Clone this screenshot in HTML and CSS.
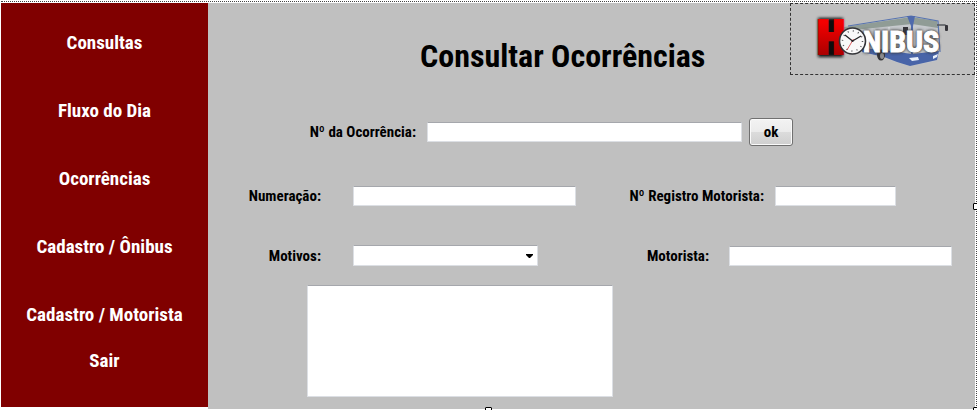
FILE: index.html
```
<!DOCTYPE html>
<html lang="pt-BR">
<head>
<meta charset="utf-8">
<meta name="viewport" content="width=device-width, initial-scale=1">
<title>Consultar Ocorrências</title>
<link rel="stylesheet" href="styles.css">
</head>
<body>
<div class="frame">
  <nav class="sidebar">
    <a href="#consultas">Consultas</a>
    <a class="spaced" href="#fluxo">Fluxo do Dia</a>
    <a class="spaced" href="#ocorrencias">Ocorrências</a>
    <a class="spaced" href="#onibus">Cadastro / Ônibus</a>
    <a class="spaced" href="#motorista">Cadastro / Motorista</a>
    <a class="exit" href="#sair">Sair</a>
  </nav>
  <main class="content">
    <header class="header">
      <h1>Consultar Ocorrências</h1>
      <div class="logo">
        <svg width="183" height="69" viewBox="791 4 183 69" role="img" aria-label="Honibus">
          <defs>
            <linearGradient id="red" x1="0" y1="0" x2="0" y2="1">
              <stop offset="0.2" stop-color="#f40000"/>
              <stop offset="0.85" stop-color="#a80000"/>
            </linearGradient>
            <filter id="soft" x="-30%" y="-30%" width="160%" height="160%"><feGaussianBlur stdDeviation="1.4"/></filter>
          </defs>
          <path d="M844 27 L911 16 L938 21 L940 54 L936 61 L910 66 L896 62 L880 56 L844 50Z" fill="#c6c9cd"/>
          <path d="M844 27 L911 17 L937 21 L938 28 L912 24 L844 31Z" fill="#909c96"/>
          <path d="M848 26 L911 16 L938 21 L940 52" fill="none" stroke="#5874b0" stroke-width="1.2"/>
          <path d="M862 48 L884 50 L912 54 L939 51 L937 60 L910 66 L897 62 L884 57 L862 52Z" fill="#4864a8"/>
          <path d="M907 16 L915 16 L913 26 L913 54 L911 54 L911 26Z" fill="#4f6aac"/>
          <path d="M889 27 V49 M875 29 V49" stroke="#e3e6e8" stroke-width="1"/>
          <rect x="903" y="27" width="5" height="8" fill="#35343a"/>
          <path d="M937 25 L945 25 L947 27" fill="none" stroke="#53565b" stroke-width="1.3"/>
          <rect x="945" y="25" width="3" height="6" rx="1" fill="#35343a"/>
          <ellipse cx="881" cy="55" rx="4" ry="5.5" fill="#343438"/>
          <ellipse cx="882" cy="56" rx="2" ry="3" fill="#8d8d8f"/>
          <path d="M909 58 L918 57 L919 60 L912 61Z" fill="#e9f0fa"/>
          <path d="M933 56 L938 54 L937 57 L933 59Z" fill="#e9f0fa"/>
          <rect x="818" y="18" width="25" height="39" fill="#111" filter="url(#soft)"/>
          <text class="logo-h" x="831" y="53" fill="url(#red)" stroke="url(#red)">H</text>
          <text class="logo-shadow" x="901" y="52" filter="url(#soft)">NIBUS</text>
          <text class="logo-name" x="901" y="52">NIBUS</text>
          <circle cx="852.5" cy="41" r="13" fill="#f9f9f9" stroke="#333438" stroke-width="1.6"/>
          <circle cx="852.5" cy="41" r="10" fill="none" stroke="#55565a" stroke-width="1.5" stroke-dasharray="1 4.236"/>
          <path d="M845 35 L852.5 41 L861 36" fill="none" stroke="#252528" stroke-width="1.3"/>
          <path d="M853.5 39 L847 50" stroke="#d4343a" stroke-width="0.8"/>
          <circle cx="852.5" cy="41" r="1.1" fill="#252528"/>
        </svg>
      </div>
    </header>
    <form class="form" onsubmit="return false">
      <div class="row row-search">
        <label for="numero">Nº da Ocorrência:</label>
        <input id="numero" type="text">
        <button type="submit">ok</button>
      </div>
      <div class="row row-number">
        <label for="numeracao">Numeração:</label>
        <input id="numeracao" type="text">
        <label for="registro">Nº Registro Motorista:</label>
        <input id="registro" type="text">
      </div>
      <div class="row row-reason">
        <label for="motivos">Motivos:</label>
        <div class="select">
          <select id="motivos"><option value=""></option></select>
          <svg class="arrow" width="7" height="4" viewBox="0 0 7 4" aria-hidden="true"><path d="M0 0H7V1L4 4H3L0 1Z"/></svg>
        </div>
        <label for="motorista">Motorista:</label>
        <input id="motorista" type="text">
      </div>
      <div class="row row-notes">
        <textarea id="descricao" aria-label="Descrição"></textarea>
      </div>
    </form>
  </main>
  <span class="handle handle-right"></span>
  <span class="handle handle-bottom"></span>
  <span class="handle handle-corner"></span>
</div>
</body>
</html>
```
FILE: styles.css
```
* {
  box-sizing: border-box;
}

body {
  margin: 0;
  overflow: hidden;
  background: #fff;
  color: #000;
  font: bold 15px/20px "Arial Narrow", "Roboto Condensed", Roboto, "Liberation Sans", sans-serif;
}

.frame {
  position: relative;
  display: flex;
  min-height: 100vh;
  margin-left: 1px;
  padding: 3px 2px 1px 0;
}

/* Dotted selection outline along the top and right edges */
.frame::before {
  content: "";
  position: absolute;
  inset: 1px 0 0 0;
  border-top: 1px dotted #444;
  border-right: 1px dotted #444;
  pointer-events: none;
}

.sidebar {
  display: flex;
  flex: 0 0 207px;
  flex-direction: column;
  align-items: center;
  margin-bottom: 2px;
  padding-top: 29px;
  background: #800000;
}

.sidebar a {
  color: #fff;
  font-size: 19px;
  line-height: 22px;
  text-decoration: none;
}

.sidebar .spaced {
  margin-top: 46px;
}

.sidebar .exit {
  margin-top: 24px;
}

.content {
  flex: 1;
  min-width: 0;
  background: #c0c0c0;
}

.header {
  display: flex;
  justify-content: space-between;
}

h1 {
  margin: 34px 0 0 212px;
  font-size: 32px;
  line-height: 38px;
  white-space: nowrap;
}

.logo {
  border: 1px dashed #333;
}

.logo svg {
  display: block;
}

.logo text {
  text-anchor: middle;
}

.logo-h {
  font-size: 44px;
  stroke-width: 4;
}

.logo-name,
.logo-shadow {
  font-size: 30px;
}

.logo-name {
  fill: #fff;
  stroke: #fff;
  stroke-width: 1;
}

.logo-shadow {
  fill: #333;
  stroke: #333;
  stroke-width: 2;
}

.form {
  padding-top: 43px;
}

.row {
  display: grid;
  align-items: center;
}

.row label {
  padding-right: 11px;
  text-align: right;
  white-space: nowrap;
}

.row-search {
  grid-template-columns: 219fr 315fr 51fr 182fr;
}

.row-number {
  grid-template-columns: 145fr 223fr 199fr 121fr 79fr;
  margin-top: 40px;
}

.row-reason {
  grid-template-columns: 145fr 185fr 191fr 223fr 23fr;
  margin-top: 39px;
}

.row-number label:first-child,
.row-reason label:first-child {
  padding-right: 32px;
}

.row-reason label {
  padding-right: 20px;
}

.row-notes {
  grid-template-columns: 306fr 362fr;
  margin-top: 19px;
  padding-left: 99px;
}

input,
select,
textarea {
  display: block;
  width: 100%;
  min-width: 0;
  height: 20px;
  margin: 0;
  padding: 0 4px;
  border: 1px solid #dcdfe4;
  border-top-color: #a5a7ac;
  border-radius: 1px;
  background: #fff;
  font: inherit;
  appearance: none;
}

.select {
  position: relative;
}

select {
  height: 21px;
}

.arrow {
  position: absolute;
  top: 9px;
  right: 5px;
  pointer-events: none;
}

textarea {
  height: 112px;
  resize: none;
}

button {
  width: 44px;
  height: 28px;
  margin-left: 7px;
  padding: 0;
  border: 1px solid #707070;
  border-radius: 3px;
  background: linear-gradient(#f3f3f3, #ebebeb 50%, #dcdcdc 50%, #cfcfcf);
  box-shadow: inset 0 0 0 1px #fafafa;
  color: #000;
  font: inherit;
}

.handle {
  position: absolute;
  width: 7px;
  height: 7px;
  border: 1px solid #000;
  border-radius: 1px;
  background: #fff;
}

.handle-right {
  top: 203px;
  right: -3px;
}

.handle-bottom {
  bottom: -4px;
  left: 484px;
}

.handle-corner {
  right: -3px;
  bottom: -4px;
}
```
